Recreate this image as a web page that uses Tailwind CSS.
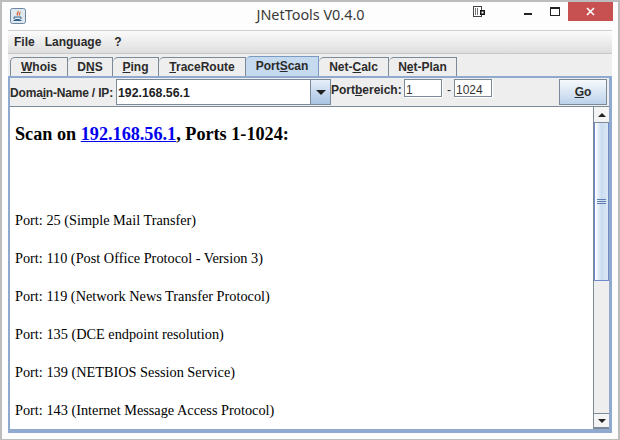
<!DOCTYPE html>
<html lang="en">
<head>
    <meta charset="UTF-8">
    <title>JNetTools V0.4.0</title>
    <script src="https://cdn.jsdelivr.net/npm/@tailwindcss/browser@4"></script>
</head>
<body class="bg-white">
    <div class="w-[620px] h-[440px] overflow-hidden flex flex-col bg-[#fdfdfd] border-2 border-b-[1px] border-[#bcbcbc] font-['Liberation_Sans',sans-serif] text-[12px] text-[#2b2b2b]">
        <!-- Title bar -->
        <div class="relative h-[28px] shrink-0 flex items-center justify-center">
            <svg class="absolute left-[8px] top-[6px]" width="18" height="18" viewBox="0 0 18 18">
                <rect x="0.5" y="0.5" width="15" height="15" rx="2" fill="#dfe7ef" stroke="#6d87a3"/>
                <path d="M8 3c1 1.500-2 2.500-.5 4.500M10 4c.5 1-1.500 1.800-.5 3.500" fill="none" stroke="#d8622a" stroke-width="1.200"/>
                <path d="M4 9h7v1c0 1-1 1.500-2 1.500H6c-1 0-2-.5-2-1.500zM3.500 12.500h8" fill="none" stroke="#34628f" stroke-width="1"/>
            </svg>
            <span class="font-['Noto_Sans',sans-serif] text-[14.400px] text-[#3a3a3a] ml-[1px] mt-[-3px]">JNetTools V0.4.0</span>
            <svg class="absolute left-[470px] top-[3px]" width="14" height="14" viewBox="0 0 14 14">
                <rect x="1.500" y="1.500" width="8" height="10" fill="#fff" stroke="#444"/>
                <path d="M3.500 3v7M5.500 3v7" stroke="#777"/>
                <rect x="8" y="5" width="5" height="5" fill="#111"/>
                <rect x="9.500" y="6.500" width="2" height="2" fill="#fff"/>
            </svg>
            <div class="absolute left-[522px] top-[11px] w-[8px] h-[2px] bg-[#222]"></div>
            <div class="absolute left-[548px] top-[5px] w-[10px] h-[9px] border border-t-2 border-[#222]"></div>
            <div class="absolute left-[566px] top-[0px] w-[45px] h-[19px] bg-[#c75050] flex items-center justify-center">
                <svg width="9" height="9" viewBox="0 0 9 9"><path d="M1 1l7 7M8 1L1 8" stroke="#fff" stroke-width="1.600"/></svg>
            </div>
        </div>

        <!-- Client area -->
        <div class="mx-[6px] h-[403px] shrink-0 flex flex-col bg-[#eeeeee] border-t border-[#d0d0d0]">
            <!-- Menu bar -->
            <div class="h-[23px] shrink-0 flex items-center gap-[10px] pl-[6px] font-bold bg-gradient-to-b from-[#fbfbfb] to-[#dedede] border-b border-[#c8c8c8]">
                <span>File</span><span>Language</span><span class="ml-[3px]">?</span>
            </div>

            <!-- Tabs -->
            <div class="h-[22px] shrink-0 flex items-end pl-[2px] font-bold">
                <div class="w-[58px] h-[19px] pb-[1px] flex items-center justify-center border border-b-0 border-[#7a8a99] rounded-tl-[5px] bg-[#eeeeee]"><span><u>W</u>hois</span></div>
                <div class="w-[45px] h-[19px] pb-[1px] flex items-center justify-center border border-b-0 border-l-0 border-[#7a8a99] rounded-tl-[5px] bg-[#eeeeee]"><span>D<u>N</u>S</span></div>
                <div class="w-[46px] h-[19px] pb-[1px] flex items-center justify-center border border-b-0 border-l-0 border-[#7a8a99] rounded-tl-[5px] bg-[#eeeeee]"><span><u>P</u>ing</span></div>
                <div class="w-[87px] h-[19px] pb-[1px] flex items-center justify-center border border-b-0 border-l-0 border-[#7a8a99] rounded-tl-[5px] bg-[#eeeeee]"><span><u>T</u>raceRoute</span></div>
                <div class="w-[73px] h-[20px] pb-[1px] flex items-center justify-center border border-b-0 border-l-0 border-[#7a9ac4] rounded-tl-[5px] bg-[#c5d9ef]"><span>Port<u>S</u>can</span></div>
                <div class="w-[70px] h-[19px] pb-[1px] flex items-center justify-center border border-b-0 border-l-0 border-[#7a8a99] rounded-tl-[5px] bg-[#eeeeee]"><span>Net-<u>C</u>alc</span></div>
                <div class="w-[68px] h-[19px] pb-[1px] flex items-center justify-center border border-b-0 border-l-0 border-[#7a8a99] rounded-tl-[5px] bg-[#eeeeee]"><span>N<u>e</u>t-Plan</span></div>
            </div>

            <!-- Tab panel -->
            <div class="h-[357px] shrink-0 flex flex-col border-2 border-[#8fa9cf] border-r-[3px] border-b-[4px] bg-[#eeeeee]">
                <!-- Input row -->
                <div class="h-[28px] shrink-0 flex items-start">
                    <span class="mt-[6px] w-[106px] shrink-0 font-bold tracking-[-0.18px] whitespace-nowrap">Doma<u>i</u>n-Name / IP:</span>
                    <div class="mt-[1px] w-[215px] h-[26px] flex border border-[#7a8a99] bg-white">
                        <span class="flex-1 pl-[1px] pt-[4px] font-bold text-[12.300px] text-[#222222]">192.168.56.1</span>
                        <div class="w-[20px] border-l border-[#7a8a99] flex items-center justify-center bg-gradient-to-b from-[#e6eff9] to-[#a9c3e3]">
                            <div class="w-0 h-0 border-x-[5px] border-x-transparent border-t-[5px] border-t-[#222]"></div>
                        </div>
                    </div>
                    <span class="mt-[3px] w-[73px] shrink-0 font-bold whitespace-nowrap">Port<u>b</u>ereich:</span>
                    <div class="mt-[1px] w-[38px] h-[18px] pt-[1px] border border-[#7a8a99] shadow-[1px_1px_0_#ffffff] bg-white pl-[1px] text-[#333]">1</div>
                    <span class="mt-[3px] ml-[5px] w-[7px] shrink-0">-</span>
                    <div class="mt-[1px] w-[38px] h-[18px] pt-[1px] border border-[#7a8a99] shadow-[1px_1px_0_#ffffff] bg-white pl-[1px] text-[#333]">1024</div>
                    <div class="mt-[1px] ml-[67px] w-[48px] h-[26px] flex items-center justify-center border border-[#7a8a99] font-bold bg-gradient-to-b from-[#f7fafd] to-[#bcd2ea]"><span><u>G</u>o</span></div>
                </div>

                <!-- Scroll pane -->
                <div class="flex-1 min-h-0 flex border-t border-[#7a8a99] bg-white">
                    <div class="flex-1 min-w-0 overflow-hidden pl-[5px] font-['Liberation_Serif',serif] text-[14.300px] leading-[16px] text-black">
                        <div class="mt-[16px] h-[69px] font-bold text-[18.200px] leading-[22px]">Scan on <a class="text-[#0000ee] underline">192.168.56.1</a>, Ports 1-1024:</div>
                        <div class="flex flex-col gap-[22px] mt-[20px]">
                            <p>Port: 25 (Simple Mail Transfer)</p>
                            <p>Port: 110 (Post Office Protocol - Version 3)</p>
                            <p>Port: 119 (Network News Transfer Protocol)</p>
                            <p>Port: 135 (DCE endpoint resolution)</p>
                            <p>Port: 139 (NETBIOS Session Service)</p>
                            <p>Port: 143 (Internet Message Access Protocol)</p>
                        </div>
                    </div>
                    <!-- Scrollbar -->
                    <div class="w-[16px] shrink-0 flex flex-col bg-[#eeeeee] border-l border-[#7a8a99]">
                        <div class="h-[16px] shrink-0 flex items-center justify-center bg-[#f4f4f4] border-b border-[#7a8a99]">
                            <div class="w-0 h-0 border-x-[4px] border-x-transparent border-b-[4px] border-b-[#222]"></div>
                        </div>
                        <div class="h-[158px] shrink-0 flex items-center justify-center border-x border-b border-[#7089c8] bg-gradient-to-r from-[#ffffff] via-[#c9dcf0] to-[#dbe8f5]">
                            <div class="w-[9px] h-[5px] border-y border-[#5f7fb5] flex items-center"><div class="w-full h-px bg-[#5f7fb5]"></div></div>
                        </div>
                        <div class="flex-1"></div>
                        <div class="h-[16px] shrink-0 flex items-center justify-center bg-[#f4f4f4] border-t border-b-2 border-[#7a8a99]">
                            <div class="w-0 h-0 border-x-[4px] border-x-transparent border-t-[4px] border-t-[#222]"></div>
                        </div>
                    </div>
                </div>
            </div>
        </div>
    </div>
</body>
</html>
